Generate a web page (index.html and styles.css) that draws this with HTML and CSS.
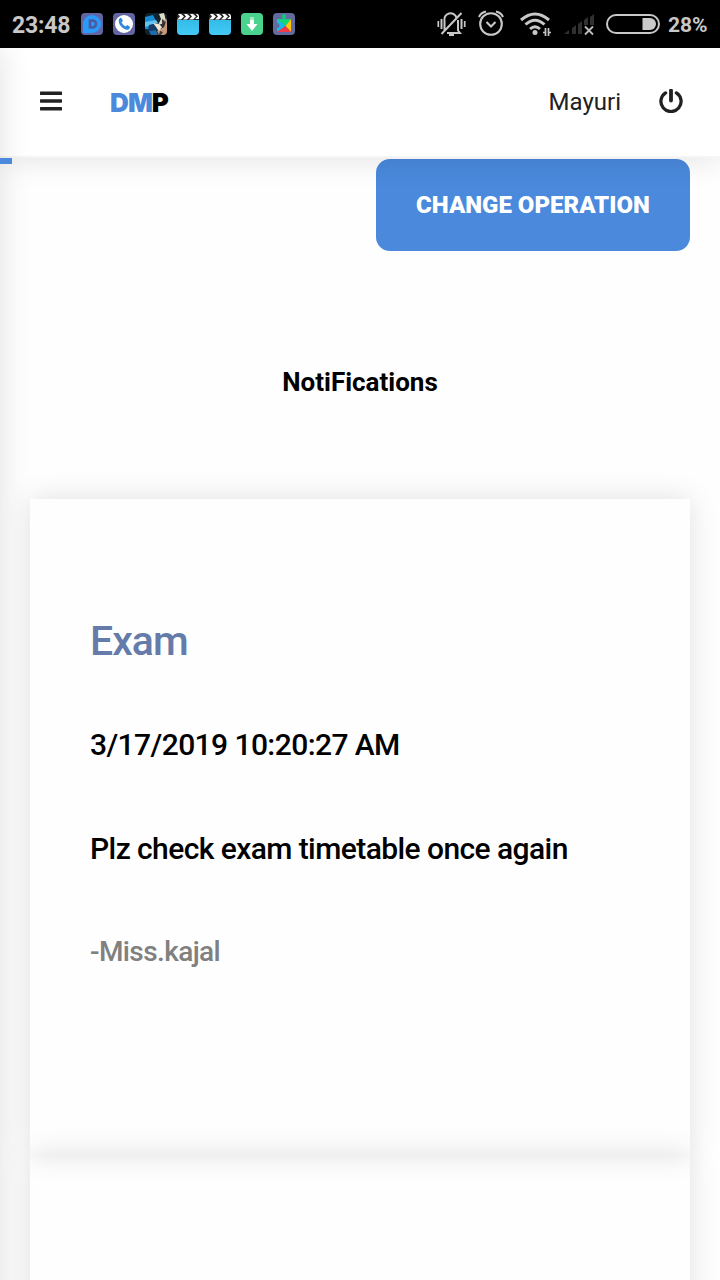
FILE: index.html
```html
<!DOCTYPE html>
<html lang="en">
<head>
<meta charset="utf-8">
<title>DMP</title>
<link rel="stylesheet" href="styles.css">
</head>
<body>
<div class="status">
  <span class="clock">23:48</span>
  <div class="apps">
    <svg class="app" viewBox="0 0 22 22"><rect width="22" height="22" rx="4" fill="#6166a3"/><path d="M2 20V11a9 9 0 1 1 9 9z" fill="#2b9bfa"/><path d="M9 7.500h2.500a3.500 3.500 0 0 1 0 7H9z" fill="none" stroke="#4c5ba0" stroke-width="2.600"/></svg>
    <svg class="app" viewBox="0 0 22 22"><rect width="22" height="22" rx="4" fill="#6166a3"/><circle cx="11" cy="11" r="9" fill="#fff"/><path d="M6 6l2-1.500 2 3.300-1.500 1.500q1.500 3 4 4.200l1.700-1.400 3 2-1.500 2.500C11 18 4 11 6 6z" fill="#3187dc"/></svg>
    <svg class="app" viewBox="0 0 22 22"><defs><clipPath id="photo"><rect width="22" height="22" rx="4"/></clipPath></defs><g clip-path="url(#photo)"><path fill="#10232b" d="M0 0h22v22H0z"/><path fill="#168dd7" d="M0 4l8-2 4 8 4 5-4 2-12-1z"/><path fill="#64c2ef" d="M0 9l11-2 2 3-13 4z"/><path fill="#173b65" d="M4 12l8-2v7l-9 1z"/><path fill="#1b6dae" d="M4 18l7-1 2 5H6z"/><path fill="#dfdac5" d="M14 1l5-1 2 8-4 3-4 1 3-6z"/><path fill="#c79879" d="M22 5v17h-8l-2-4 7-4z"/><path fill="#eee8d5" d="M8 10l6 1 3 3-3 4z"/><path fill="#41382f" d="M17 6l3 2-2 4 2 1-3 1zM15 18l3 1-2 3h-2z"/></g></svg>
    <svg class="app" viewBox="0 0 22 22"><defs><linearGradient id="clap" x1="0" y1="0" x2="0" y2="1"><stop stop-color="#31bce8"/><stop offset="1" stop-color="#45c9f5"/></linearGradient></defs><path d="M0 7h22v11a4 4 0 0 1-4 4H4a4 4 0 0 1-4-4z" fill="url(#clap)"/><path d="M2 0h18l2 2v5H0V2z" fill="#252525"/><path d="M1 1h3l3 2.500-3 3H0l3-3zM7 1h3l3 2.500-3 3H6l3-3zM13 1h3l3 2.500-3 3h-4l3-3zM19 1h2l1 2v3h-4l3-2.500z" fill="#fff"/></svg>
    <svg class="app" viewBox="0 0 22 22"><path d="M0 7h22v11a4 4 0 0 1-4 4H4a4 4 0 0 1-4-4z" fill="url(#clap)"/><path d="M2 0h18l2 2v5H0V2z" fill="#252525"/><path d="M1 1h3l3 2.500-3 3H0l3-3zM7 1h3l3 2.500-3 3H6l3-3zM13 1h3l3 2.500-3 3h-4l3-3zM19 1h2l1 2v3h-4l3-2.500z" fill="#fff"/></svg>
    <svg class="app" viewBox="0 0 22 22"><rect width="22" height="22" rx="4" fill="#4ad38d"/><path d="M9 4h4v3H9z" fill="#a5e9c6"/><path d="M9 7h4v4h3.500L11 18l-5.500-7H9z" fill="#fff"/></svg>
    <svg class="app" viewBox="0 0 22 22"><rect width="22" height="22" rx="4" fill="#626b9d"/><path d="M4 6h14l-5.500 7z" fill="#12d978"/><circle cx="11" cy="3" r="2" fill="#12c976"/><path d="M9.500 3h3v4h-3z" fill="#12c976"/><path d="M4 6l8.500 7L4 19v-4a2 2 0 0 0 0-5z" fill="#18bce9"/><path d="M18 6v13l-5.500-6z" fill="#ffc60b"/><path d="M4 19l8.500-6 5.500 6z" fill="#f63849"/></svg>
  </div>
  <svg class="mute" viewBox="0 0 30 26" fill="none" stroke="#c8c8c8" stroke-width="2"><path d="M7.500 19.500V10a6 6 0 0 1 12-3M21 9v10.500l2 2.500H10M4.500 23L24.500 2"/><path d="M12 24h5" stroke-width="2"/><path d="M4.500 8v10M24.500 8v10" stroke-width="2"/><path d="M1.300 10v6M27.700 10v6" stroke-width="1.700"/></svg>
  <svg class="alarm" viewBox="0 0 28 28" fill="none" stroke="#c8c8c8" stroke-width="2.100"><circle cx="14" cy="15" r="10.800"/><path d="M2 8q2-4.500 7-5.500M26 8q-2-4.500-7-5.500M9.500 13l4.500 4.500 4.500-4.500"/></svg>
  <svg class="wifi" viewBox="0 0 34 26" fill="none" stroke="#c8c8c8" stroke-width="3"><path d="M2 9q14-12 28 0M6.500 13.500q9.500-8.500 19 0M11 18q5-4.500 10 0"/><circle cx="16" cy="21.500" r="2.500" fill="#c8c8c8" stroke="none"/><path d="M26.500 17v8M29.500 17v8M24 21.500h2.500M29.500 21.500h2.500" stroke-width="1.700"/></svg>
  <svg class="signal" viewBox="0 0 32 24"><path d="M1 20l5-4v4zM9 20v-6l4-3v9zM15 20V10l4-3v13zM21 11V6l4-3v8zM27 11V3l4-3v11z" fill="#303030"/><path d="M22 12.500l8 8M30 12.500l-8 8" stroke="#bdbdbd" stroke-width="1.800"/></svg>
  <svg class="battery" viewBox="0 0 54 20"><rect x="1" y="1" width="52" height="18" rx="9" fill="none" stroke="#c8c8c8" stroke-width="2"/><path d="M36.500 4H44a6 6 0 0 1 0 12h-7.500z" fill="#cacaca"/></svg>
  <span class="percent">28%</span>
</div>
<div class="page">
  <header class="header">
    <svg class="menu" viewBox="0 0 22 20" fill="#212121"><rect y=".6" width="22" height="3.400" rx=".6"/><rect y="8.300" width="22" height="3.400" rx=".6"/><rect y="16" width="22" height="3.400" rx=".6"/></svg>
    <span class="logo"><span class="logo-blue">DM</span>P</span>
    <span class="user">Mayuri</span>
    <svg class="power" viewBox="0 0 24 24" fill="none" stroke="#212121" stroke-width="3.300" stroke-linecap="round"><path d="M6.600 3.900a10.100 10.100 0 1 0 10.800 0"/><path d="M12 1.500v10" stroke-width="3.800"/></svg>
  </header>
  <main class="content">
    <button class="change">CHANGE OPERATION</button>
    <h1 class="title">NotiFications</h1>
    <section class="card">
      <h2 class="subject">Exam</h2>
      <p class="text">3/17/2019 10:20:27 AM</p>
      <p class="text">Plz check exam timetable once again</p>
      <p class="author">-Miss.kajal</p>
    </section>
    <section class="card"></section>
  </main>
  <div class="drawer"></div>
  <div class="progress"></div>
</div>
</body>
</html>
```
FILE: styles.css
```css
* { box-sizing: border-box; }
body { margin: 0; width: 720px; height: 1280px; overflow: hidden; background: #fefefe; font-family: Roboto, sans-serif; }
svg { display: block; flex-shrink: 0; }
.status { height: 48px; display: flex; align-items: center; background: #000; color: #c8c8c8; padding-left: 12px; }
.clock { width: 69px; font-size: 23px; font-weight: 700; letter-spacing: -.2px; white-space: nowrap; padding-top: 2px; }
.apps { display: flex; gap: 10px; }
.app { width: 22px; height: 22px; }
.mute { width: 30px; height: 26px; margin-left: 142px; }
.alarm { width: 28px; height: 28px; margin-left: 10px; margin-top: -2px; }
.wifi { width: 34px; height: 26px; margin-left: 14px; }
.signal { width: 32px; height: 24px; margin-left: 10px; margin-top: 4px; }
.battery { width: 54px; height: 20px; margin-left: 11px; }
.percent { font-size: 21px; font-weight: 700; margin-left: 8px; padding-top: 2px; }
.page { position: relative; height: 1232px; overflow: hidden; }
.header { position: relative; z-index: 1; height: 110px; display: flex; align-items: center; padding: 0 37px 0 40px; background: #fff; border-bottom: 2px solid #f5f5f5; box-shadow: 0 0 30px rgba(0, 0, 0, .12); }
.menu { width: 22px; height: 20px; margin-top: -2px; }
.logo { margin-left: 48px; font-family: Inter, sans-serif; font-size: 26px; font-weight: 900; letter-spacing: -.9px; color: #000; }
.logo-blue { color: #4a89dc; }
.user { margin-left: auto; font-size: 24px; color: #212121; }
.power { width: 24px; height: 24px; margin-left: 38px; margin-top: -2px; }
.content { display: flex; flex-direction: column; padding: 1px 30px 0; }
.change { align-self: flex-end; width: 314px; height: 92px; padding: 0; border: 0; border-radius: 14px; background: #4a89dc; color: #fff; font: 900 24px Roboto, sans-serif; }
.title { margin: 116px 0 101px; font-size: 26px; line-height: 31px; font-weight: 700; text-align: center; color: #000; }
.card { height: 656px; flex-shrink: 0; padding: 116px 60px 0; box-shadow: 0 0 28px rgba(0, 0, 0, .12); font-weight: 500; }
.subject { margin: 0 0 52px; font-size: 41px; line-height: 52px; font-weight: 500; letter-spacing: -1px; color: #657ba9; }
.text { margin: 0 0 52px; font-size: 30px; line-height: 52px; letter-spacing: -.58px; color: #000; }
.author { margin: -1px 0 0; font-size: 28px; line-height: 52px; letter-spacing: -.6px; color: #808080; }
.drawer { position: absolute; z-index: 2; top: 0; left: -520px; width: 520px; height: 1400px; box-shadow: 0 0 30px rgba(0, 0, 0, .12); }
.progress { position: absolute; z-index: 3; left: 0; top: 110px; width: 12px; height: 6px; background: #4a89dc; }
```
